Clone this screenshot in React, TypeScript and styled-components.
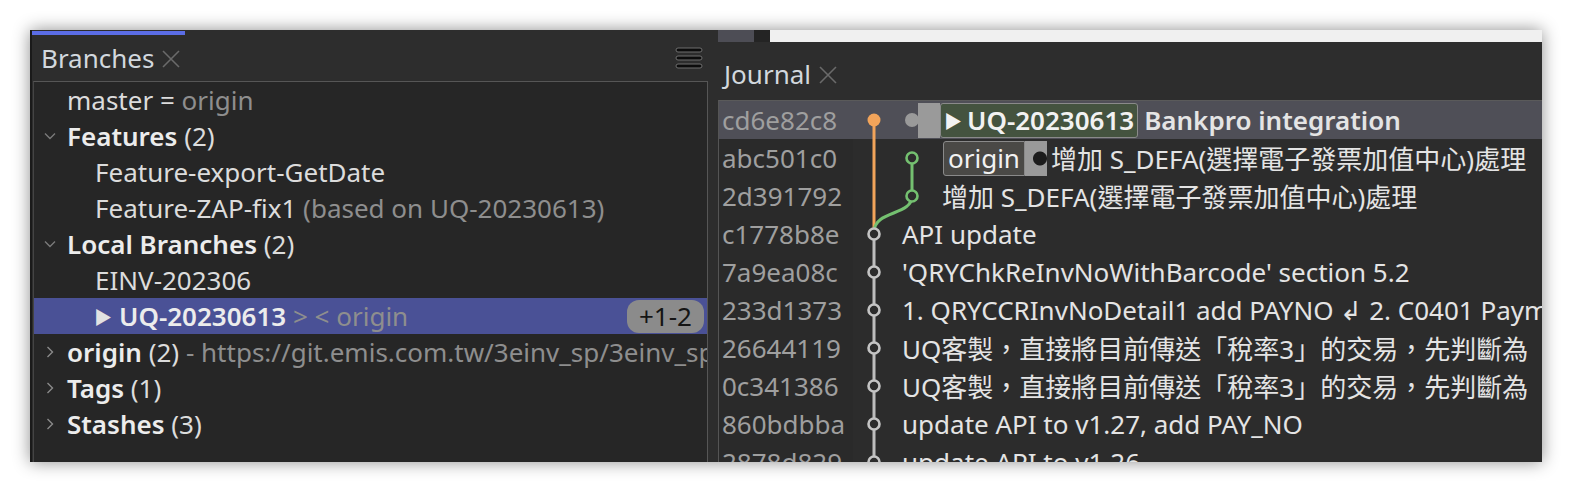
import React from 'react';
import styled, { createGlobalStyle } from 'styled-components';

const Global = createGlobalStyle`
  html, body { margin: 0; padding: 0; background: #ffffff; }
  body { font-family: "Noto Sans", "Noto Sans CJK TC", sans-serif; }
  * { box-sizing: border-box; }
`;

const FONT = `"Noto Sans", "Noto Sans CJK TC", sans-serif`;

const Page = styled.div`
  width: 1572px;
  height: 492px;
  padding: 30px;
  background: #ffffff;
`;

const Window = styled.div`
  width: 1512px;
  height: 432px;
  display: flex;
  background: #2d2d2d;
  border-left: 2px solid #1a1a1a;
  box-shadow: 0 0 16px rgba(0, 0, 0, 0.45);
  overflow: hidden;
  font-family: ${FONT};
  font-size: 26px;
`;

/* ---------- left panel ---------- */
const LeftPanel = styled.div`
  width: 684px;
  flex: none;
  display: flex;
  flex-direction: column;
`;

const Accent = styled.div`
  width: 153px;
  height: 4px;
  margin-top: 1px;
  background: #5b6de6;
`;

const TabBar = styled.div<{ $h: number; $pl: number; $pt?: number }>`
  height: ${p => p.$h}px;
  flex: none;
  display: flex;
  align-items: center;
  padding: ${p => p.$pt ?? 0}px 13px 0 ${p => p.$pl}px;
`;

const TabTitle = styled.span`
  color: #d2d8de;
  font-size: 26px;
  line-height: 1;
`;

const CloseX = styled.svg`
  width: 18px;
  height: 18px;
  margin-left: 8px;
  margin-top: 2px;
`;

const Spacer = styled.div`
  flex: 1;
`;

const Hamburger = styled.svg`
  width: 28px;
  height: 22px;
`;

const BranchList = styled.div`
  flex: 1;
  width: 675px;
  margin-left: 1px;
  background: #262626;
  border-top: 1px solid #565656;
  border-left: 1px solid #444;
  border-right: 1px solid #565656;
  overflow: hidden;
`;

const BRow = styled.div<{ $indent: number; $sel?: boolean }>`
  height: 36px;
  display: flex;
  align-items: center;
  padding-left: ${p => p.$indent}px;
  padding-right: 3px;
  background: ${p => (p.$sel ? '#4a5196' : 'transparent')};
  color: #dcdcdc;
  white-space: nowrap;
  overflow: hidden;
`;

const Twisty = styled.span`
  width: 23px;
  flex: none;
  display: flex;
  align-items: center;
  margin-left: 10px;
`;

const Bold = styled.span`
  font-weight: 600;
  color: #ececec;
`;

const Dim = styled.span`
  color: #8e8e8e;
`;

const Gap = styled.span`
  white-space: pre;
`;

const PlayMark = styled.span`
  font-size: 18px;
  color: #e2e2e2;
  margin-right: 7px;
`;

const Badge = styled.span`
  margin-left: auto;
  height: 33px;
  padding: 0 12px;
  border-radius: 12px;
  background: #8b8b8b;
  color: #141414;
  display: flex;
  align-items: center;
`;

/* ---------- right panel ---------- */
const RightPanel = styled.div`
  flex: 1;
  display: flex;
  flex-direction: column;
  min-width: 0;
`;

const TopStrip = styled.div`
  height: 12px;
  flex: none;
  display: flex;
  margin-left: 2px;
`;

const StripBlock = styled.div<{ $w?: number; $c: string }>`
  width: ${p => (p.$w ? `${p.$w}px` : 'auto')};
  flex: ${p => (p.$w ? 'none' : '1')};
  background: ${p => p.$c};
`;

const CommitList = styled.div`
  flex: 1;
  position: relative;
  margin-left: 2px;
  border-top: 1px solid #5a5a5a;
  border-left: 1px solid #555;
  overflow: hidden;
  background: #2c2c2c;
`;

const CRow = styled.div<{ $sel?: boolean }>`
  height: 38px;
  display: flex;
  align-items: center;
  background: ${p => (p.$sel ? '#4f4f57' : 'transparent')};
  white-space: nowrap;
`;

const Hash = styled.div<{ $sel?: boolean }>`
  width: 134px;
  height: 100%;
  flex: none;
  display: flex;
  align-items: center;
  padding-left: 3px;
  color: #9f9f9f;
  background: ${p => (p.$sel ? 'transparent' : '#2a2a2a')};
`;

const Message = styled.div<{ $pl: number; $bold?: boolean }>`
  flex: 1;
  display: flex;
  align-items: center;
  padding-left: ${p => p.$pl}px;
  color: #e4e4e4;
  font-weight: ${p => (p.$bold ? 600 : 400)};
  overflow: hidden;
`;

const Knob = styled.span`
  width: 14px;
  height: 14px;
  border-radius: 50%;
  background: #9a9a9a;
  flex: none;
  margin-right: -1px;
`;

const PinBar = styled.span<{ $w: number; $hole?: boolean }>`
  width: ${p => p.$w}px;
  height: 35px;
  flex: none;
  background: ${p =>
    p.$hole
      ? 'radial-gradient(circle at 15px 50%, #1c1c1c 6.5px, #9a9a9a 7.5px)'
      : '#9a9a9a'};
`;

const RefBox = styled.span<{ $bg: string; $round: string; $px?: number }>`
  height: 35px;
  display: flex;
  align-items: center;
  padding: 0 ${p => p.$px ?? 3}px;
  background: ${p => p.$bg};
  border: 1px solid #8a8a8a;
  border-radius: ${p => p.$round};
  color: #f2f2f2;
  flex: none;
`;

const RefPlay = styled.span`
  font-size: 18px;
  margin-right: 5px;
`;

const MsgText = styled.span<{ $ml?: number }>`
  margin-left: ${p => p.$ml ?? 0}px;
`;

const GraphSvg = styled.svg`
  position: absolute;
  left: 134px;
  top: 0;
  width: 100px;
  height: 420px;
  pointer-events: none;
`;

const XIcon = () => (
  <CloseX viewBox="0 0 18 18">
    <path d="M1 1 L17 17 M17 1 L1 17" stroke="#6a6a6a" strokeWidth="1.6" fill="none" />
  </CloseX>
);

const Chevron = ({ open }: { open: boolean }) => (
  <svg width="12" height="12" viewBox="0 0 12 12">
    {open ? (
      <path d="M1 3.5 L6 8.5 L11 3.5" stroke="#7a7a7a" strokeWidth="1.4" fill="none" />
    ) : (
      <path d="M3.5 1 L8.5 6 L3.5 11" stroke="#8a8a8a" strokeWidth="1.4" fill="none" />
    )}
  </svg>
);

const commits = [
  'cd6e82c8', 'abc501c0', '2d391792', 'c1778b8e', '7a9ea08c',
  '233d1373', '26644119', '0c341386', '860bdbba', '2878d829',
];

const msgs: Record<number, string> = {
  3: 'API update',
  4: "'QRYChkReInvNoWithBarcode' section 5.2",
  5: '1. QRYCCRInvNoDetail1 add PAYNO \u21B2 2. C0401 Payment',
  6: 'UQ客製，直接將目前傳送「稅率3」的交易，先判斷為',
  7: 'UQ客製，直接將目前傳送「稅率3」的交易，先判斷為',
  8: 'update API to v1.27, add PAY_NO',
  9: 'update API to v1.26',
};

const Graph = () => {
  const X = 21;
  const G = 59;
  const cy = (i: number) => 19 + 38 * i;
  return (
    <GraphSvg viewBox="0 0 100 420">
      <path d={`M${X} ${cy(3)} L${X} 420`} stroke="#bdbdbd" strokeWidth="3" fill="none" />
      <path d={`M${X} ${cy(0)} L${X} ${cy(3)}`} stroke="#f2a45a" strokeWidth="3" fill="none" />
      <path
        d={`M${G} ${cy(1)} L${G} ${cy(2)} C${G} ${cy(2) + 20} ${X} ${cy(2) + 14} ${X} ${cy(3) - 2}`}
        stroke="#74c070"
        strokeWidth="3"
        fill="none"
      />
      <circle cx={X} cy={cy(0)} r="6.5" fill="#f2a45a" />
      <circle cx={G} cy={cy(1)} r="5.5" fill="#2c2c2c" stroke="#74c070" strokeWidth="2.6" />
      <circle cx={G} cy={cy(2)} r="5.5" fill="#2c2c2c" stroke="#74c070" strokeWidth="2.6" />
      {[3, 4, 5, 6, 7, 8, 9].map(i => (
        <circle key={i} cx={X} cy={cy(i)} r="5.5" fill="#2c2c2c" stroke="#c4c4c4" strokeWidth="2.6" />
      ))}
    </GraphSvg>
  );
};

export default function App() {
  return (
    <>
      <Global />
      <Page lang="zh-TW">
        <Window>
          <LeftPanel>
            <Accent />
            <TabBar $h={46} $pl={9}>
              <TabTitle>Branches</TabTitle>
              <XIcon />
              <Spacer />
              <Hamburger viewBox="0 0 28 22">
                {[1, 9, 17].map(y => (
                  <rect key={y} x="1" y={y} width="26" height="4" rx="2" fill="#0c0c0c" stroke="#6e6e6e" strokeWidth="1" />
                ))}
              </Hamburger>
            </TabBar>
            <BranchList>
              <BRow $indent={33}>
                master<Gap> = </Gap><Dim>origin</Dim>
              </BRow>
              <BRow $indent={0}>
                <Twisty><Chevron open /></Twisty>
                <Bold>Features</Bold><Gap> </Gap>(2)
              </BRow>
              <BRow $indent={61}>Feature-export-GetDate</BRow>
              <BRow $indent={61}>
                Feature-ZAP-fix1<Gap> </Gap><Dim>(based on UQ-20230613)</Dim>
              </BRow>
              <BRow $indent={0}>
                <Twisty><Chevron open /></Twisty>
                <Bold>Local Branches</Bold><Gap> </Gap>(2)
              </BRow>
              <BRow $indent={61}>EINV-202306</BRow>
              <BRow $indent={60} $sel>
                <PlayMark>▶</PlayMark>
                <Bold>UQ-20230613</Bold><Gap> </Gap><Dim>&gt; &lt; origin</Dim>
                <Badge>+1-2</Badge>
              </BRow>
              <BRow $indent={0}>
                <Twisty><Chevron open={false} /></Twisty>
                <Bold>origin</Bold><Gap> </Gap>(2)<Gap> </Gap>
                <Dim>- https://git.emis.com.tw/3einv_sp/3einv_sp.git</Dim>
              </BRow>
              <BRow $indent={0}>
                <Twisty><Chevron open={false} /></Twisty>
                <Bold>Tags</Bold><Gap> </Gap>(1)
              </BRow>
              <BRow $indent={0}>
                <Twisty><Chevron open={false} /></Twisty>
                <Bold>Stashes</Bold><Gap> </Gap>(3)
              </BRow>
            </BranchList>
          </LeftPanel>
          <RightPanel>
            <TopStrip>
              <StripBlock $w={36} $c="#4d4d55" />
              <StripBlock $w={16} $c="#242424" />
              <StripBlock $c="#f0f0f0" />
            </TopStrip>
            <TabBar $h={58} $pl={8} $pt={6}>
              <TabTitle>Journal</TabTitle>
              <XIcon />
            </TabBar>
            <CommitList>
              {commits.map((h, i) => (
                <CRow key={h} $sel={i === 0}>
                  <Hash $sel={i === 0}>{h}</Hash>
                  {i === 0 && (
                    <Message $pl={52} $bold>
                      <Knob />
                      <PinBar $w={22} />
                      <RefBox $bg="#44533f" $round="3px">
                        <RefPlay>▶</RefPlay>UQ-20230613
                      </RefBox>
                      <MsgText $ml={6}>Bankpro integration</MsgText>
                    </Message>
                  )}
                  {i === 1 && (
                    <Message $pl={90}>
                      <RefBox $bg="#4a4946" $round="3px 0 0 3px" $px={4}>origin</RefBox>
                      <PinBar $w={22} $hole />
                      <MsgText $ml={4}>增加 S_DEFA(選擇電子發票加值中心)處理</MsgText>
                    </Message>
                  )}
                  {i === 2 && (
                    <Message $pl={89}>
                      <MsgText>增加 S_DEFA(選擇電子發票加值中心)處理</MsgText>
                    </Message>
                  )}
                  {i >= 3 && (
                    <Message $pl={49}>
                      <MsgText>{msgs[i]}</MsgText>
                    </Message>
                  )}
                </CRow>
              ))}
              <Graph />
            </CommitList>
          </RightPanel>
        </Window>
      </Page>
    </>
  );
}
